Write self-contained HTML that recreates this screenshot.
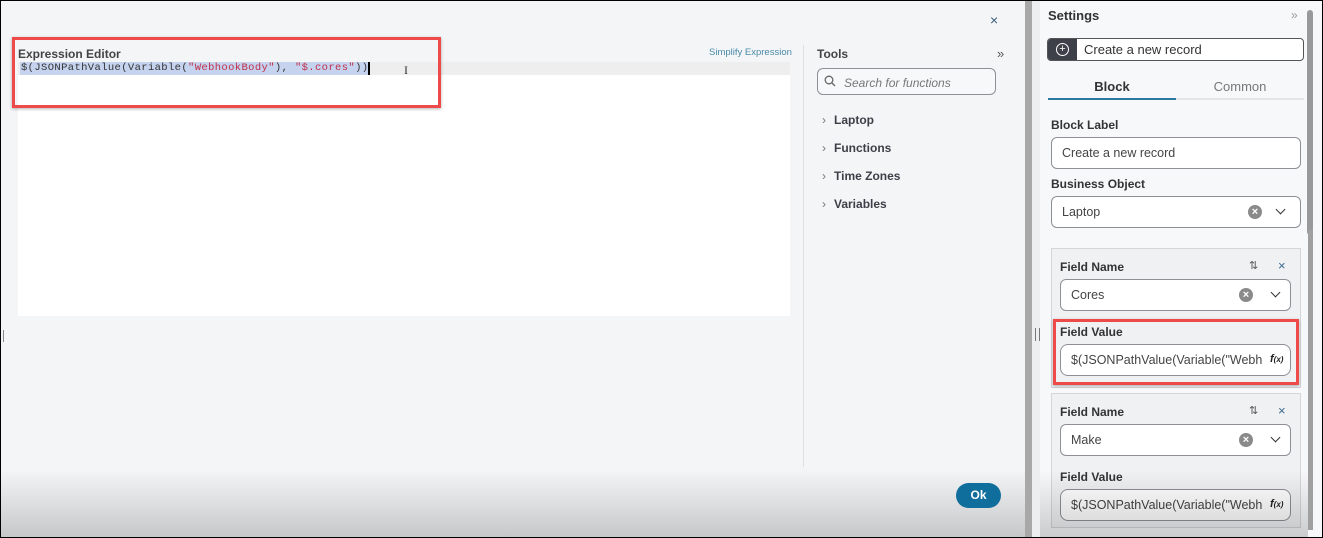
<!DOCTYPE html><html><head><style>
*{box-sizing:border-box;margin:0;padding:0}
body{width:1323px;height:538px;overflow:hidden;position:relative;background:#f4f5f7;font-family:"Liberation Sans",sans-serif;color:#333}
.a{position:absolute}
.inp{position:absolute;background:#fff;border:1px solid #8e9096;border-radius:6px;font-size:12.5px;color:#444;padding-left:10px;display:flex;align-items:center;overflow:hidden;white-space:nowrap}
.lbl{position:absolute;font-size:12px;font-weight:bold;color:#333}
.x{position:absolute;width:14px;height:14px;border-radius:50%;background:#8a8a8a;color:#fff;font-size:11px;line-height:14px;text-align:center;font-weight:bold}
.chev{position:absolute;width:7px;height:7px;border-right:1.5px solid #333;border-bottom:1.5px solid #333;transform:rotate(45deg)}
.tool{position:absolute;left:822px;font-size:12px;font-weight:bold;color:#3c3f47}
.tool span{color:#777;font-weight:normal;margin-right:8px}
.red{position:absolute;border:3px solid #ef4a4a;box-shadow:0 1px 3px rgba(0,0,0,.3)}
</style></head><body>
<div class="a" style="left:0;top:0;width:1323px;height:538px;border:1px solid #000;z-index:10;pointer-events:none"></div>
<div class="a" style="left:990px;top:12px;font-size:14px;color:#3a5a7a">×</div>
<div class="a" style="left:18px;top:47px;font-size:12px;font-weight:bold;color:#444">Expression Editor</div>
<div class="a" style="left:709px;top:47px;font-size:9.5px;color:#4a8aa8">Simplify Expression</div>
<div class="a" style="left:18px;top:62px;width:772px;height:254px;background:#fff"></div>
<div class="a" style="left:18px;top:62px;width:772px;height:13px;background:#eeeeee"></div>
<div class="a" style="left:20px;top:62px;height:13px;width:348px;background:#c5d3ef"></div>
<div class="a" style="left:21px;top:62px;font-family:'Liberation Mono',monospace;font-size:10.5px;letter-spacing:0.38px;line-height:13px;color:#333">$(JSONPathValue(Variable(<span style="color:#c0304a">"WebhookBody"</span>), <span style="color:#c0304a">"$.cores"</span>))</div>
<div class="a" style="left:368px;top:62px;width:2px;height:13px;background:#000"></div>
<div class="a" style="left:404px;top:63px;font-size:12px;color:#333;font-family:'Liberation Serif',serif">I</div>
<div class="red" style="left:12px;top:37px;width:429px;height:71px"></div>
<div class="a" style="left:803px;top:45px;width:1px;height:422px;background:#e0e0e0"></div>
<div class="a" style="left:817px;top:47px;font-size:12px;font-weight:bold;color:#444">Tools</div>
<div class="a" style="left:997px;top:46px;font-size:13px;color:#555">»</div>
<div class="a" style="left:817px;top:68px;width:179px;height:27px;border:1px solid #8e9096;border-radius:6px;background:#f7f8fa"></div>
<svg class="a" style="left:824px;top:75px" width="12" height="12"><circle cx="5" cy="5" r="3.8" stroke="#666" stroke-width="1.3" fill="none"/><path d="M8 8l3 3" stroke="#666" stroke-width="1.3"/></svg>
<div class="a" style="left:844px;top:76px;font-size:12px;font-style:italic;color:#777">Search for functions</div>
<div class="tool" style="top:113px"><span>›</span>Laptop</div>
<div class="tool" style="top:141px"><span>›</span>Functions</div>
<div class="tool" style="top:169px"><span>›</span>Time Zones</div>
<div class="tool" style="top:197px"><span>›</span>Variables</div>
<div class="a" style="left:0;top:470px;width:1025px;height:68px;background:linear-gradient(#f4f5f7,#c6c7c9)"></div>
<div class="a" style="left:956px;top:483px;width:45px;height:25px;border-radius:13px;background:#0f6e9c;color:#fff;font-size:12px;font-weight:bold;text-align:center;line-height:25px">Ok</div>
<div class="a" style="left:3px;top:330px;width:1px;height:12px;background:#888"></div>
<div class="a" style="left:1025px;top:0;width:7px;height:538px;background:#a8a8a8"></div>
<div class="a" style="left:1032px;top:0;width:8px;height:538px;background:#eceef0"></div>
<div class="a" style="left:1035px;top:328px;width:1px;height:13px;background:#777"></div>
<div class="a" style="left:1039px;top:328px;width:1px;height:13px;background:#777"></div>
<div class="a" style="left:1040px;top:0;width:283px;height:538px;background:#f7f8fa"></div>
<div class="a" style="left:1307px;top:10px;width:6px;height:225px;border-radius:3px;background:#999"></div>
<div class="a" style="left:1308px;top:230px;width:5px;height:300px;background:#a0a0a0"></div>
<div class="a" style="left:1048px;top:8px;font-size:13px;font-weight:bold;color:#333">Settings</div>
<div class="a" style="left:1291px;top:8px;font-size:12px;color:#999">»</div>
<div class="a" style="left:1047px;top:38px;width:257px;height:23px;border:1px solid #555;border-radius:4px;background:#fff;overflow:hidden"><div style="position:absolute;left:0;top:0;width:29px;height:23px;background:#3d4049"></div><div style="position:absolute;left:8px;top:4px;width:13px;height:13px;border:1.5px solid #fff;border-radius:50%;color:#fff;font-size:11px;line-height:10px;text-align:center">+</div><div style="position:absolute;left:36px;top:3px;font-size:13px;color:#333">Create a new record</div></div>
<div class="a" style="left:1048px;top:79px;width:128px;text-align:center;font-size:13px;font-weight:bold;color:#333">Block</div>
<div class="a" style="left:1176px;top:79px;width:128px;text-align:center;font-size:13px;color:#777">Common</div>
<div class="a" style="left:1048px;top:98px;width:256px;height:2px;background:#e4e5e7"></div>
<div class="a" style="left:1048px;top:98px;width:128px;height:2px;background:#2a7aa0"></div>
<div class="lbl" style="left:1051px;top:118px">Block Label</div>
<div class="inp" style="left:1051px;top:137px;width:250px;height:32px">Create a new record</div>
<div class="lbl" style="left:1051px;top:177px">Business Object</div>
<div class="inp" style="left:1051px;top:196px;width:250px;height:32px">Laptop</div>
<div class="x" style="left:1248px;top:205px">×</div><div class="chev" style="left:1277px;top:206px"></div>
<div class="a" style="left:1051px;top:248px;width:250px;height:140px;border:1px solid #d5d6d8;background:#f0f1f3"></div>
<div class="lbl" style="left:1060px;top:260px">Field Name</div>
<div class="a" style="left:1249px;top:259px;font-size:11px;color:#555">⇅</div>
<div class="a" style="left:1278px;top:258px;font-size:13px;color:#3a6a90">×</div>
<div class="inp" style="left:1060px;top:279px;width:231px;height:32px">Cores</div>
<div class="x" style="left:1239px;top:288px">×</div><div class="chev" style="left:1272px;top:289px"></div>
<div class="lbl" style="left:1060px;top:325px">Field Value</div>
<div class="inp" style="left:1060px;top:344px;width:231px;height:32px;border-radius:8px"><div style="width:192px;overflow:hidden">$(JSONPathValue(Variable("Webhc</div></div>
<div class="a" style="left:1270px;top:353px;font-size:11px;font-weight:bold;font-style:italic;color:#222">f<span style="font-size:8px">(x)</span></div>
<div class="red" style="left:1053px;top:319px;width:246px;height:66px"></div>
<div class="a" style="left:1051px;top:393px;width:250px;height:135px;border:1px solid #d5d6d8;background:#f0f1f3"></div>
<div class="lbl" style="left:1060px;top:405px">Field Name</div>
<div class="a" style="left:1249px;top:404px;font-size:11px;color:#555">⇅</div>
<div class="a" style="left:1278px;top:403px;font-size:13px;color:#3a6a90">×</div>
<div class="inp" style="left:1060px;top:424px;width:231px;height:32px">Make</div>
<div class="x" style="left:1239px;top:433px">×</div><div class="chev" style="left:1272px;top:434px"></div>
<div class="lbl" style="left:1060px;top:470px">Field Value</div>
<div class="inp" style="left:1060px;top:489px;width:231px;height:32px;border-radius:8px"><div style="width:192px;overflow:hidden">$(JSONPathValue(Variable("Webhc</div></div>
<div class="a" style="left:1270px;top:498px;font-size:11px;font-weight:bold;font-style:italic;color:#222">f<span style="font-size:8px">(x)</span></div>
<div class="a" style="left:1040px;top:470px;width:268px;height:68px;background:linear-gradient(rgba(0,0,0,0),rgba(0,0,0,0.18))"></div>
</body></html>
